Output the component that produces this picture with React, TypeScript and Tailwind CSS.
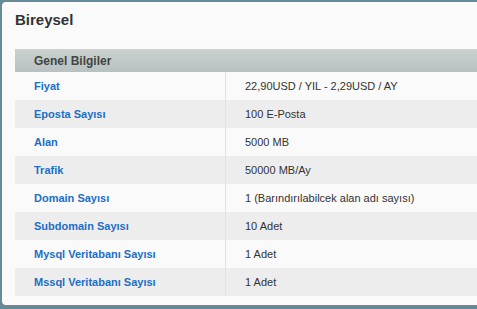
const rows: [string, string][] = [
  ['Fiyat', '22,90USD / YIL - 2,29USD / AY'],
  ['Eposta Sayısı', '100 E-Posta'],
  ['Alan', '5000 MB'],
  ['Trafik', '50000 MB/Ay'],
  ['Domain Sayısı', '1 (Barındırılabilcek alan adı sayısı)'],
  ['Subdomain Sayısı', '10 Adet'],
  ['Mysql Veritabanı Sayısı', '1 Adet'],
  ['Mssql Veritabanı Sayısı', '1 Adet'],
]

export default function App() {
  return (
    <div
      className="h-[309px] w-[477px] overflow-hidden bg-[#678a97] pl-[2px] pt-[2px]"
      style={{ fontFamily: '"Liberation Sans", Arial, sans-serif' }}
    >
      <div className="w-[500px] rounded-[4px] bg-[#fafafa] pb-[9px] pl-[13px]">
        <h1 className="h-[47px] pt-[9px] text-[15px] font-bold leading-[18px] text-[#333]">Bireysel</h1>

        <div className="w-[487px]">
          {/* header */}
          <div className="flex h-[23px] items-center bg-gradient-to-b from-[#cbd2d0] to-[#b7c1bf] pl-[19px] text-[12px] font-bold text-[#444]">
            Genel Bilgiler
          </div>

          {rows.map(([label, value], i) => (
            <div
              key={label}
              className={`flex h-[28px] items-center text-[11px] ${i % 2 === 0 ? 'bg-[#fafafa]' : 'bg-[#ededed]'}`}
            >
              <div className="flex h-full w-[211px] items-center border-r border-[#e2e2e2] pl-[19px] font-bold text-[#1c6ec6]">
                {label}
              </div>
              <div className="pl-[19px] text-[#333]">{value}</div>
            </div>
          ))}
        </div>
      </div>
    </div>
  )
}
